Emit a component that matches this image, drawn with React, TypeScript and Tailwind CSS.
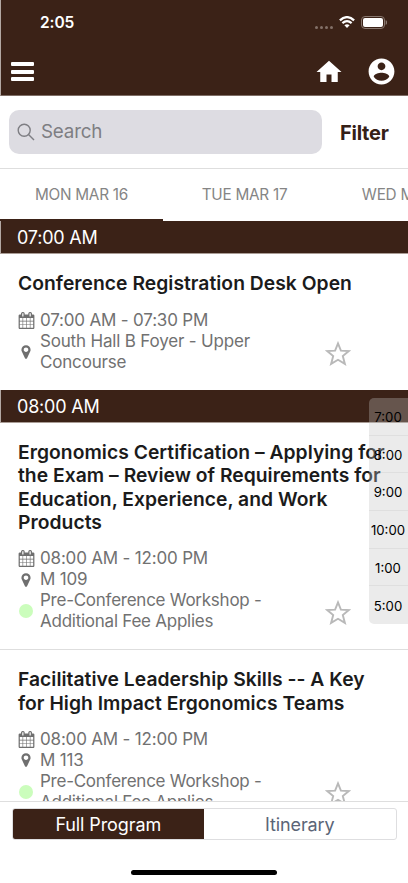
import React from 'react';
import { MdHome } from 'react-icons/md';

interface Session {
  title: string[];
  time: string;
  location: string[];
  track?: string[];
}

const deskOpen: Session = {
  title: ['Conference Registration Desk Open'],
  time: '07:00 AM - 07:30 PM',
  location: ['South Hall B Foyer - Upper', 'Concourse'],
};

const workshops: Session[] = [
  {
    title: [
      'Ergonomics Certification – Applying for',
      'the Exam – Review of Requirements for',
      'Education, Experience, and Work',
      'Products',
    ],
    time: '08:00 AM - 12:00 PM',
    location: ['M 109'],
    track: ['Pre-Conference Workshop -', 'Additional Fee Applies'],
  },
  {
    title: ['Facilitative Leadership Skills -- A Key', 'for High Impact Ergonomics Teams'],
    time: '08:00 AM - 12:00 PM',
    location: ['M 113'],
    track: ['Pre-Conference Workshop -', 'Additional Fee Applies'],
  },
];

const jumpTimes = ['7:00', '8:00', '9:00', '10:00', '1:00', '5:00'];

function AccountIcon() {
  return (
    <svg viewBox="0 0 24 24" className="ml-[22px] h-[31px] w-[31px] fill-white">
      <path d="M12 2C6.48 2 2 6.48 2 12s4.48 10 10 10 10-4.48 10-10S17.52 2 12 2zm0 3c1.66 0 3 1.34 3 3s-1.34 3-3 3-3-1.34-3-3 1.34-3 3-3zm0 14.2c-2.5 0-4.71-1.28-6-3.22.03-1.99 4-3.08 6-3.08 1.99 0 5.97 1.09 6 3.08-1.29 1.94-3.5 3.22-6 3.22z" />
    </svg>
  );
}

function CalendarIcon() {
  return (
    <svg viewBox="0 0 1792 1792" className="h-[17px] w-[17px] fill-[#6f6f6f]">
      <path d="M192 1664h288v-288h-288v288zM544 1664h320v-288h-320v288zM192 1312h288v-320h-288v320zM544 1312h320v-320h-320v320zM192 928h288v-288h-288v288zM928 1664h320v-288h-320v288zM544 928h320v-288h-320v288zM1312 1664h288v-288h-288v288zM928 1312h320v-320h-320v320zM576 448v-288q0-13-9.5-22.5t-22.5-9.5h-64q-13 0-22.5 9.5t-9.5 22.5v288q0 13 9.5 22.5t22.5 9.5h64q13 0 22.5-9.5t9.5-22.5zM1312 1312h288v-320h-288v320zM928 928h320v-288h-320v288zM1312 928h288v-288h-288v288zM1344 448v-288q0-13-9.5-22.5t-22.5-9.5h-64q-13 0-22.5 9.5t-9.5 22.5v288q0 13 9.5 22.5t22.5 9.5h64q13 0 22.5-9.5t9.5-22.5zM1728 384v1280q0 52-38 90t-90 38h-1408q-52 0-90-38t-38-90v-1280q0-52 38-90t90-38h128v-96q0-66 47-113t113-47h64q66 0 113 47t47 113v96h384v-96q0-66 47-113t113-47h64q66 0 113 47t47 113v96h128q52 0 90 38t38 90z" />
    </svg>
  );
}

function MarkerIcon() {
  return (
    <svg viewBox="0 0 1792 1792" className="h-4 w-4 fill-[#6f6f6f]">
      <path d="M1152 640q0-106-75-181t-181-75-181 75-75 181 75 181 181 75 181-75 75-181zm256 0q0 109-33 179l-364 774q-16 33-47.5 52t-67.5 19-67.5-19-46.5-52l-365-774q-33-70-33-179 0-212 150-362t362-150 362 150 150 362z" />
    </svg>
  );
}

function StarIcon() {
  return (
    <svg viewBox="0 0 26 25" className="h-[25px] w-[26px]" fill="none" stroke="#b9b9b9" strokeWidth="1.9">
      <path d="M13 2.4 L15.9 9.6 L23.8 10 L17.8 15.1 L19.9 22.9 L13 18.8 L6.1 22.9 L8.2 15.1 L2.2 10 L10.1 9.6 Z" />
    </svg>
  );
}

function StatusBar() {
  return (
    <div className="flex h-[46px] items-center justify-between pr-[21px] pl-[39px]">
      <span className="text-[15.5px] leading-5 font-semibold tracking-[-0.1px]">2:05</span>
      <div className="flex items-center">
        <div className="mt-2 mr-[6px] flex gap-[2px]">
          <i className="h-[3px] w-[3px] rounded-full bg-[#837168]" />
          <i className="h-[3px] w-[3px] rounded-full bg-[#837168]" />
          <i className="h-[3px] w-[3px] rounded-full bg-[#837168]" />
          <i className="h-[3px] w-[3px] rounded-full bg-[#837168]" />
        </div>
        <svg viewBox="0 0 16 12" className="mr-[6px] h-3 w-4 -translate-y-px" fill="none" stroke="white" strokeWidth="2.3">
          <path d="M0.9 4.4 Q8 -2.1 15.1 4.4" />
          <path d="M3.4 7.2 Q8 3.1 12.6 7.2" />
          <path d="M8 11.9 L5.4 9.2 Q8 7.3 10.6 9.2 Z" fill="white" stroke="none" />
        </svg>
        <svg viewBox="0 0 26 13" className="h-[13px] w-[26px] -translate-y-px">
          <rect x="0.5" y="0.5" width="23" height="12" rx="3.5" fill="none" stroke="#88776e" />
          <rect x="2" y="2" width="20" height="9" rx="2" fill="white" />
          <path d="M25 4.5 Q26.4 6.5 25 8.5 Z" fill="#9b8c84" stroke="#9b8c84" strokeWidth="0.5" />
        </svg>
      </div>
    </div>
  );
}

function TimeBand({ label }: { label: string }) {
  return (
    <h2 className="flex h-[33px] items-center border-b border-l border-b-[#a99c95] border-l-[#b3a8a3] bg-[#3b2217] pt-px pl-4 text-[18px] tracking-[-0.2px] text-white">
      {label}
    </h2>
  );
}

function SessionCard({ session }: { session: Session }) {
  return (
    <article className="relative shrink-0 px-[18px] pt-[18.4px] pb-[17.2px]">
      <h3 className="text-[19.3px] leading-[23.3px] font-semibold tracking-[0.03px] whitespace-nowrap text-[#1b1b1b]">
        {session.title.map((line) => (
          <span key={line} className="block">{line}</span>
        ))}
      </h3>
      <div className="mt-[14px] text-[17px] leading-[20.9px] tracking-[-0.18px] text-[#717171]">
        <div className="flex items-center gap-[5px]">
          <CalendarIcon />
          <span>{session.time}</span>
        </div>
        <div className="flex items-center gap-[6px]">
          <MarkerIcon />
          <span>
            {session.location.map((line) => (
              <span key={line} className="block">{line}</span>
            ))}
          </span>
        </div>
        {session.track && (
          <div className="flex items-center gap-[7px] tracking-[-0.25px]">
            <i className="ml-px h-[14px] w-[14px] rounded-full bg-[#cbfdbc]" />
            <span>
              {session.track.map((line) => (
                <span key={line} className="block">{line}</span>
              ))}
            </span>
          </div>
        )}
      </div>
      <button aria-label="Add to itinerary" className="absolute right-[57px] bottom-[24px]">
        <StarIcon />
      </button>
    </article>
  );
}

export default function App() {
  return (
    <div className="relative flex h-[883px] w-[408px] flex-col overflow-hidden bg-white font-['Inter','Liberation_Sans',sans-serif]">
      <header className="h-24 shrink-0 border-b border-l border-b-[#7e6d65] border-l-[#b3a8a3] bg-[#3b2217] text-white">
        <StatusBar />
        <nav className="flex h-[51px] items-center pr-[11px] pl-[10px]">
          <button aria-label="Menu" className="flex w-[23px] flex-col gap-[3.5px]">
            <i className="h-1 rounded-[1px] bg-white" />
            <i className="h-1 rounded-[1px] bg-white" />
            <i className="h-1 rounded-[1px] bg-white" />
          </button>
          <MdHome className="ml-auto h-[30px] w-[30px]" />
          <AccountIcon />
        </nav>
      </header>

      {/* Search */}
      <div className="flex h-[73px] shrink-0 items-center border-b border-[#dedede] pl-[9px]">
        <div className="flex h-11 w-[313px] items-center rounded-[10px] bg-[#dddce2] pl-2 text-[18.8px] tracking-[-0.2px] text-[#7e7e83]">
          <svg viewBox="0 0 18 18" className="mr-[6px] h-[18px] w-[18px]" fill="none" stroke="#7e7e83" strokeWidth="1.4">
            <circle cx="7.2" cy="7.2" r="6" />
            <path d="M11.5 11.5 L17 17" />
          </svg>
          Search
        </div>
        <button className="ml-[18px] pt-px text-[20px] font-bold tracking-[-0.25px] text-[#352017]">Filter</button>
      </div>

      {/* Days */}
      <div className="flex h-[52px] shrink-0 text-[15.3px] tracking-[-0.25px] whitespace-nowrap text-[#858585]">
        <div className="flex w-[163px] shrink-0 items-center justify-center border-b-2 border-[#3b2217] pt-[3px]">MON MAR 16</div>
        <div className="flex w-[163px] shrink-0 items-center justify-center pt-px">TUE MAR 17</div>
        <div className="flex w-[163px] shrink-0 items-center justify-center pt-px">WED MAR 18</div>
      </div>

      {/* Sessions */}
      <main className="h-[580px] shrink-0 overflow-hidden">
        <TimeBand label="07:00 AM" />
        <SessionCard session={deskOpen} />
        <TimeBand label="08:00 AM" />
        {workshops.map((session) => (
          <div key={session.location[0]} className="border-b border-[#dedede]">
            <SessionCard session={session} />
          </div>
        ))}
      </main>

      <footer className="flex flex-1 flex-col items-center border-t border-[#dedede] bg-white pt-[6px]">
        <div className="flex h-8 w-[385px] overflow-hidden rounded-[3px] border border-[#dedee0] text-[18px] tracking-[-0.1px]">
          <button className="flex-1 bg-[#3b2217] text-white">Full Program</button>
          <button className="flex-1 text-[#5b6577]">Itinerary</button>
        </div>
        <div className="mt-[30px] h-[5px] w-[146px] rounded-full bg-black" />
      </footer>

      {/* Jump to time */}
      <div className="absolute top-[398px] right-0 w-[39px] overflow-hidden rounded-l-[5px] bg-[#c1c1c1]/32 text-[13.2px] text-black">
        {jumpTimes.map((time) => (
          <div key={time} className="flex h-[37.67px] items-center justify-center border-b border-black/5 pt-[3px] pr-px last:border-b-0">
            {time}
          </div>
        ))}
      </div>
    </div>
  );
}
